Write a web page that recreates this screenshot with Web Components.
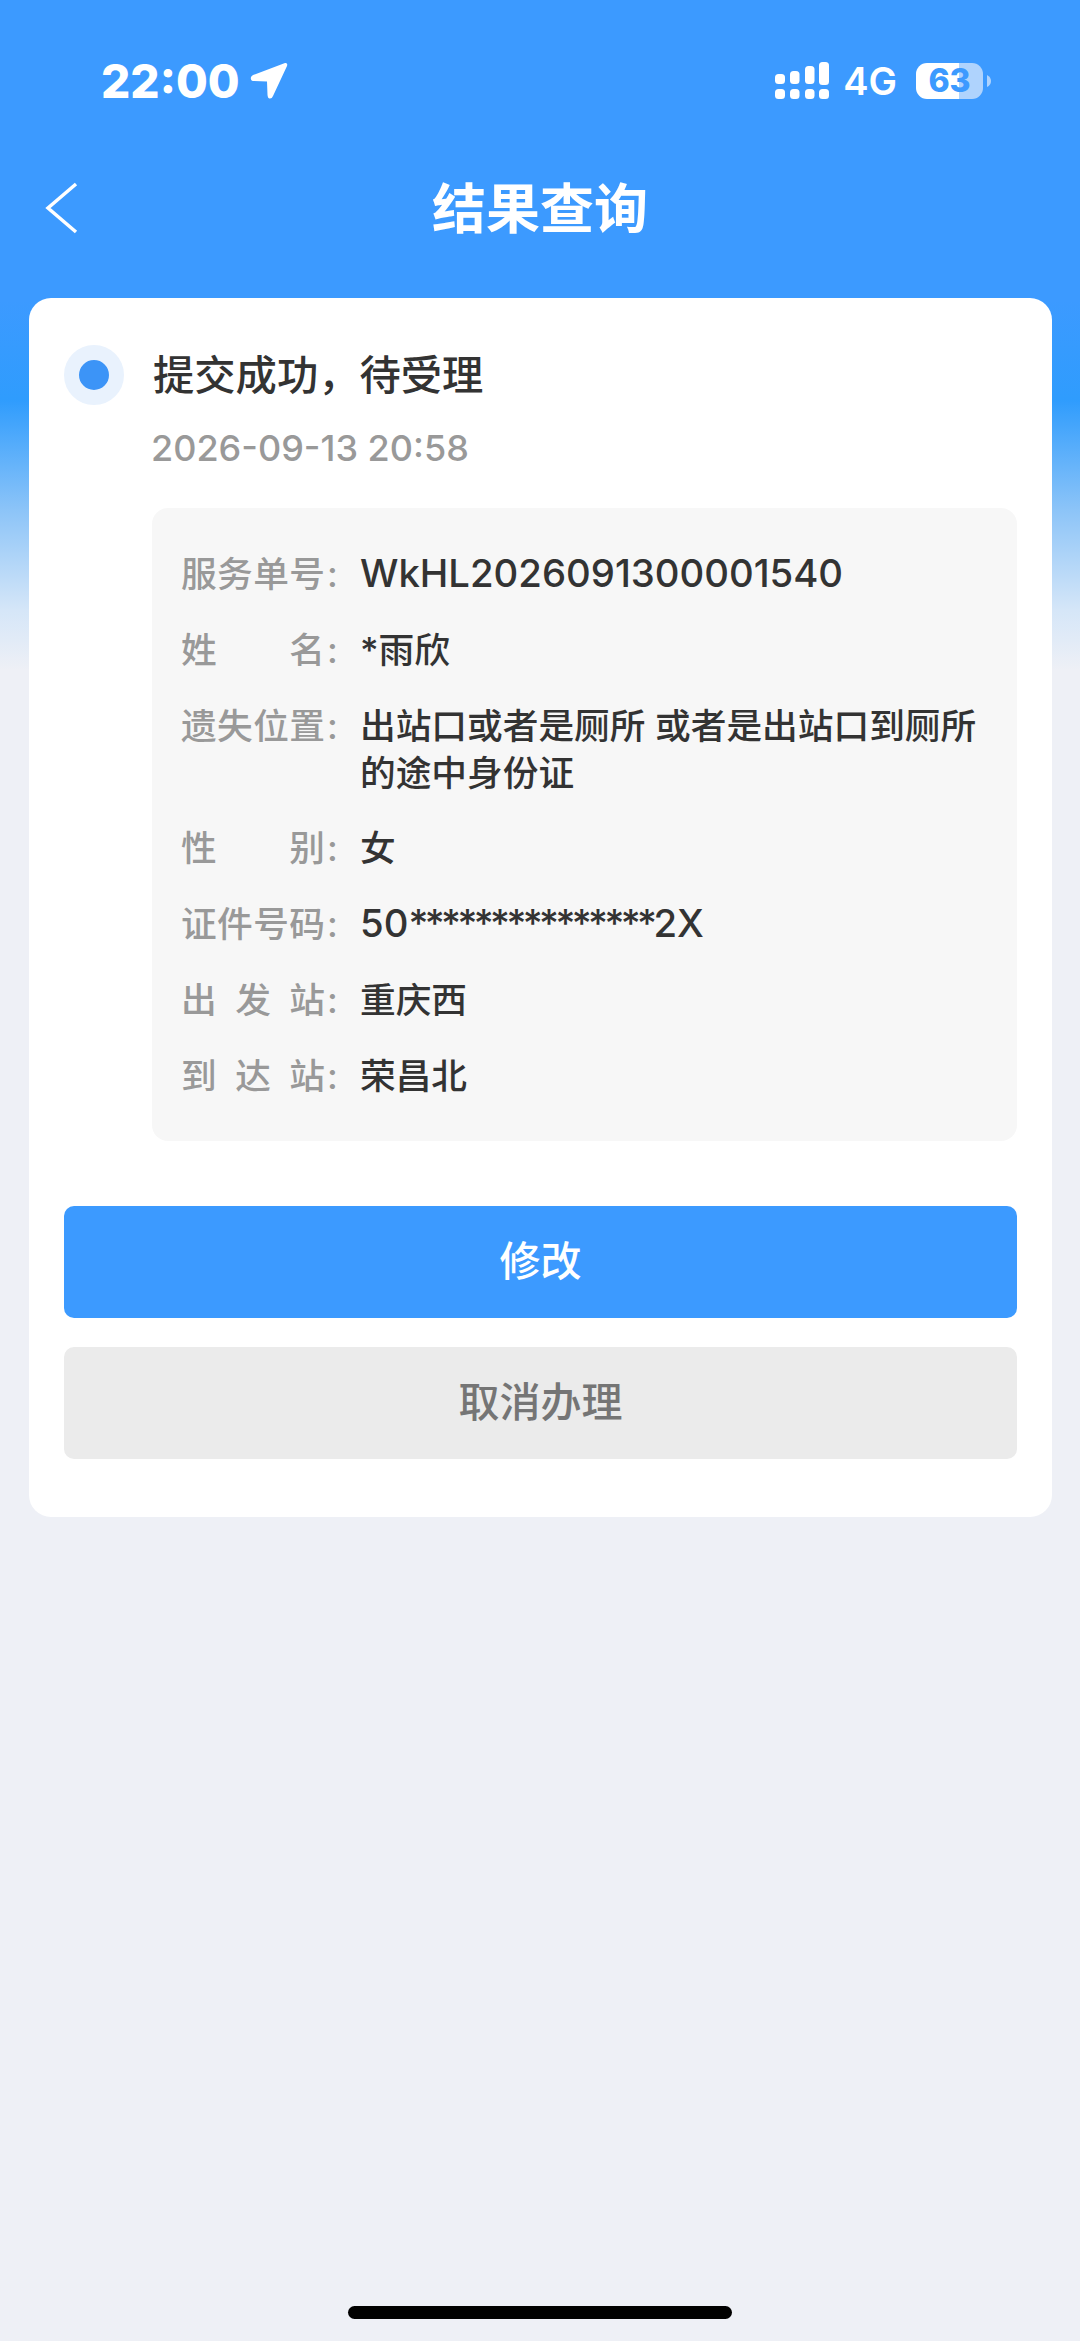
<!DOCTYPE html>
<html lang="zh-CN">
<head>
<meta charset="utf-8">
<title>结果查询</title>
<style>
  html, body {
    margin: 0;
    padding: 0;
  }

  body {
    background: #eef0f6;
    font-family: Inter, "Noto Sans CJK SC", sans-serif;
  }

  /* latin text in the list is drawn a bit bigger than the chinese next to it */
  .latin {
    font-size: 38.3px;
    line-height: 1;
  }

  .mask {
    letter-spacing: -3.6px;
  }
</style>
</head>
<body>
<result-page>
  <status-bar></status-bar>
  <nav-bar>结果查询</nav-bar>
  <result-card>
    <span slot="title">提交成功，待受理</span>
    <span slot="date">2026-09-13 20:58</span>
    <info-row label="服务单号"><span class="latin">WkHL2026091300001540</span></info-row>
    <info-row label="姓名">*雨欣</info-row>
    <info-row label="遗失位置">出站口或者是厕所 或者是出站口到厕所的途中身份证</info-row>
    <info-row label="性别">女</info-row>
    <info-row label="证件号码"><span class="latin">50<span class="mask">***************</span>2X</span></info-row>
    <info-row label="出发站">重庆西</info-row>
    <info-row label="到达站">荣昌北</info-row>
    <action-button slot="actions" kind="primary">修改</action-button>
    <action-button slot="actions">取消办理</action-button>
  </result-card>
  <home-indicator></home-indicator>
</result-page>

<script>
/**
 * Full page shell, holds the blue fade behind the header
 */
class ResultPage extends HTMLElement {
  constructor() {
    super();
    this.attachShadow({ mode: "open" });
    this.shadowRoot.innerHTML = `
      <style>
        :host {
          display: flex;
          flex-direction: column;
          height: 2341px;
          background: linear-gradient(#3c9aff 0, #3c9aff 300px, #2f9cfd 400px, #8cc4f8 510px, #d5e6f8 610px, #eef0f6 670px);
        }
      </style>
      <slot></slot>
    `;
  }
}

class StatusBar extends HTMLElement {
  constructor() {
    super();
    this.attachShadow({ mode: "open" });
    this.shadowRoot.innerHTML = `
      <style>
        :host {
          display: flex;
          align-items: center;
          justify-content: space-between;
          height: 162px;
          padding: 0 89px 0 101px;
          color: #fff;
        }

        .left, .right {
          display: flex;
          align-items: center;
        }

        .time {
          font: 800 46px/50px Inter, sans-serif;
        }

        .arrow {
          margin-left: 10px;
        }

        .net {
          margin: 0 19px 0 14px;
          font: 600 38px/44px Inter, sans-serif;
        }

        .battery {
          position: relative;
          display: flex;
          align-items: center;
          justify-content: center;
          width: 67px;
          height: 36px;
          border-radius: 11px;
          background: linear-gradient(90deg, #fff 0, #fff 43px, #afd3fd 43px);
          color: #3c9aff;
          font: 800 32px/36px Inter, sans-serif;
        }

        .nub {
          margin-left: 4px;
        }
      </style>
      <div class="left">
        <span class="time">22:00</span>
        <svg class="arrow" width="38" height="38" viewBox="0 0 38 38">
          <path fill="#fff" d="M35 1 L3 13 Q0 15 1 17 Q1 19 4 19 L17 19.5 L17.5 33 Q18 37 20 36.5 Q22 36.5 23 34 L37 4 Q38 .5 35 1Z"/>
        </svg>
      </div>
      <div class="right">
        <svg width="54" height="38" viewBox="0 0 54 38" fill="#fff">
          <rect x="0" y="12" width="10" height="10" rx="3.5"/>
          <rect x="15" y="9" width="9.5" height="13" rx="3.5"/>
          <rect x="30" y="4" width="9.5" height="18" rx="3.5"/>
          <rect x="44" y="0" width="10" height="23" rx="3.5"/>
          <rect x="0" y="27" width="10" height="10" rx="3.5"/>
          <rect x="15" y="27" width="9.5" height="10" rx="3.5"/>
          <rect x="30" y="27" width="9.5" height="10" rx="3.5"/>
          <rect x="44" y="27" width="10" height="10" rx="3.5"/>
        </svg>
        <span class="net">4G</span>
        <span class="battery">63</span>
        <svg class="nub" width="4" height="12" viewBox="0 0 4 12">
          <path fill="#afd3fd" d="M0 0 Q4 2 4 6 Q4 10 0 12Z"/>
        </svg>
      </div>
    `;
  }
}

class NavBar extends HTMLElement {
  constructor() {
    super();
    this.attachShadow({ mode: "open" });
    this.shadowRoot.innerHTML = `
      <style>
        :host {
          display: flex;
          align-items: center;
          justify-content: center;
          position: relative;
          height: 92px;
          color: #fff;
          font: 700 54px/88px "Noto Sans CJK SC", sans-serif;
        }

        svg {
          position: absolute;
          left: 45px;
          top: 20px;
        }

        span {
          padding-bottom: 4px;
        }
      </style>
      <svg width="33" height="52" viewBox="0 0 33 52">
        <path d="M31 2 L3 26 L31 50" fill="none" stroke="#fff" stroke-width="3.5"/>
      </svg>
      <span><slot></slot></span>
    `;
  }
}

class ResultCard extends HTMLElement {
  constructor() {
    super();
    this.attachShadow({ mode: "open" });
    this.shadowRoot.innerHTML = `
      <style>
        :host {
          display: block;
          margin: 44px 28px 0 29px;
          padding: 47px 35px 58px;
          border-radius: 22px;
          background: #fff;
        }

        .step {
          display: flex;
          align-items: center;
          gap: 29px;
        }

        .dot {
          box-sizing: border-box;
          width: 60px;
          height: 60px;
          border: 15px solid #e9f2fd;
          border-radius: 50%;
          background: #3c94f7;
        }

        .title {
          margin-bottom: 5px;
          color: #333;
          font: 500 41.3px/55px "Noto Sans CJK SC", sans-serif;
        }

        .date {
          margin: 21px 0 38px 87px;
          color: #999;
          font: 500 36px/44px Inter, sans-serif;
        }

        .panel {
          display: flex;
          flex-direction: column;
          gap: 28.8px;
          margin-left: 88px;
          padding: 43px 30px 41px;
          border-radius: 16px;
          background: #f7f7f7;
        }

        .actions {
          display: flex;
          flex-direction: column;
          gap: 29px;
          margin-top: 65px;
        }
      </style>
      <div class="step">
        <div class="dot"></div>
        <div class="title"><slot name="title"></slot></div>
      </div>
      <div class="date"><slot name="date"></slot></div>
      <div class="panel"><slot></slot></div>
      <div class="actions"><slot name="actions"></slot></div>
    `;
  }
}

class InfoRow extends HTMLElement {
  constructor() {
    super();
    this.attachShadow({ mode: "open" });
    this.shadowRoot.innerHTML = `
      <style>
        :host {
          display: grid;
          grid-template-columns: 179px 1fr;
          font: 500 35.7px/47px Inter, "Noto Sans CJK SC", sans-serif;
          color: #333;
        }

        .label {
          display: flex;
          color: #999;
        }

        .name {
          width: 144px;
          margin-left: -1px;
          text-align-last: justify;
        }

        .colon {
          margin-left: 2px;
        }

        .value {
          margin-left: -1px;
        }
      </style>
      <div class="label"><span class="name"></span><span class="colon">:</span></div>
      <div class="value"><slot></slot></div>
    `;
    this.shadowRoot.querySelector(".name").textContent = this.getAttribute("label");
  }
}

class ActionButton extends HTMLElement {
  constructor() {
    super();
    this.attachShadow({ mode: "open" });
    this.shadowRoot.innerHTML = `
      <style>
        :host {
          display: flex;
          align-items: center;
          justify-content: center;
          box-sizing: border-box;
          height: 112px;
          padding-bottom: 7px;
          border-radius: 10px;
          background: #ebebeb;
          color: #757575;
          font: 500 41px/100px "Noto Sans CJK SC", sans-serif;
        }

        :host([kind="primary"]) {
          background: #3c9aff;
          color: #fff;
        }
      </style>
      <slot></slot>
    `;
  }
}

class HomeIndicator extends HTMLElement {
  constructor() {
    super();
    this.attachShadow({ mode: "open" });
    this.shadowRoot.innerHTML = `
      <style>
        :host {
          display: block;
          align-self: center;
          width: 384px;
          height: 13px;
          margin-top: auto;
          margin-bottom: 22px;
          border-radius: 7px;
          background: #000;
        }
      </style>
    `;
  }
}

customElements.define("result-page", ResultPage);
customElements.define("status-bar", StatusBar);
customElements.define("nav-bar", NavBar);
customElements.define("result-card", ResultCard);
customElements.define("info-row", InfoRow);
customElements.define("action-button", ActionButton);
customElements.define("home-indicator", HomeIndicator);
</script>
</body>
</html>
